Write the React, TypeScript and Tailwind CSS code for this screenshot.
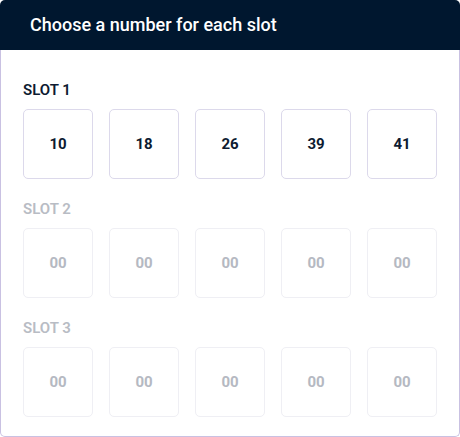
import React from "react";

const slots = [
  { label: "SLOT 1", values: ["10", "18", "26", "39", "41"], active: true },
  { label: "SLOT 2", values: ["00", "00", "00", "00", "00"], active: false },
  { label: "SLOT 3", values: ["00", "00", "00", "00", "00"], active: false },
];

export default function App() {
  return (
    <div
      className="flex w-[460px] h-[437px] flex-col bg-white"
      style={{ fontFamily: "Roboto, 'Liberation Sans', sans-serif" }}
    >
      <div className="flex h-[50px] shrink-0 items-center rounded-t-[5px] bg-[#00172f] px-[30px]">
        <h1 className="text-[18px] font-medium leading-none text-white">
          Choose a number for each slot
        </h1>
      </div>
      <div className="flex flex-1 flex-col rounded-b-[5px] border-x border-b border-[#c9c1e2] px-[22px] pt-[30px]">
        {slots.map((slot, i) => (
          <div key={slot.label} className={i > 0 ? "mt-5" : ""}>
            <div
              className={
                "text-[15px] font-semibold leading-5 " +
                (slot.active ? "text-[#0d1b31]" : "text-[#b8bcc4]")
              }
            >
              {slot.label}
            </div>
            <div className="mt-[9px] flex gap-4">
              {slot.values.map((v, j) => (
                <div
                  key={j}
                  className={
                    "flex h-[70px] w-[70px] items-center justify-center rounded-[5px] border text-[15px] font-bold " +
                    (slot.active
                      ? "border-[#dcd9eb] text-[#0d1b31]"
                      : "border-[#efeff4] text-[#b5b9c2]")
                  }
                >
                  {v}
                </div>
              ))}
            </div>
          </div>
        ))}
      </div>
    </div>
  );
}
